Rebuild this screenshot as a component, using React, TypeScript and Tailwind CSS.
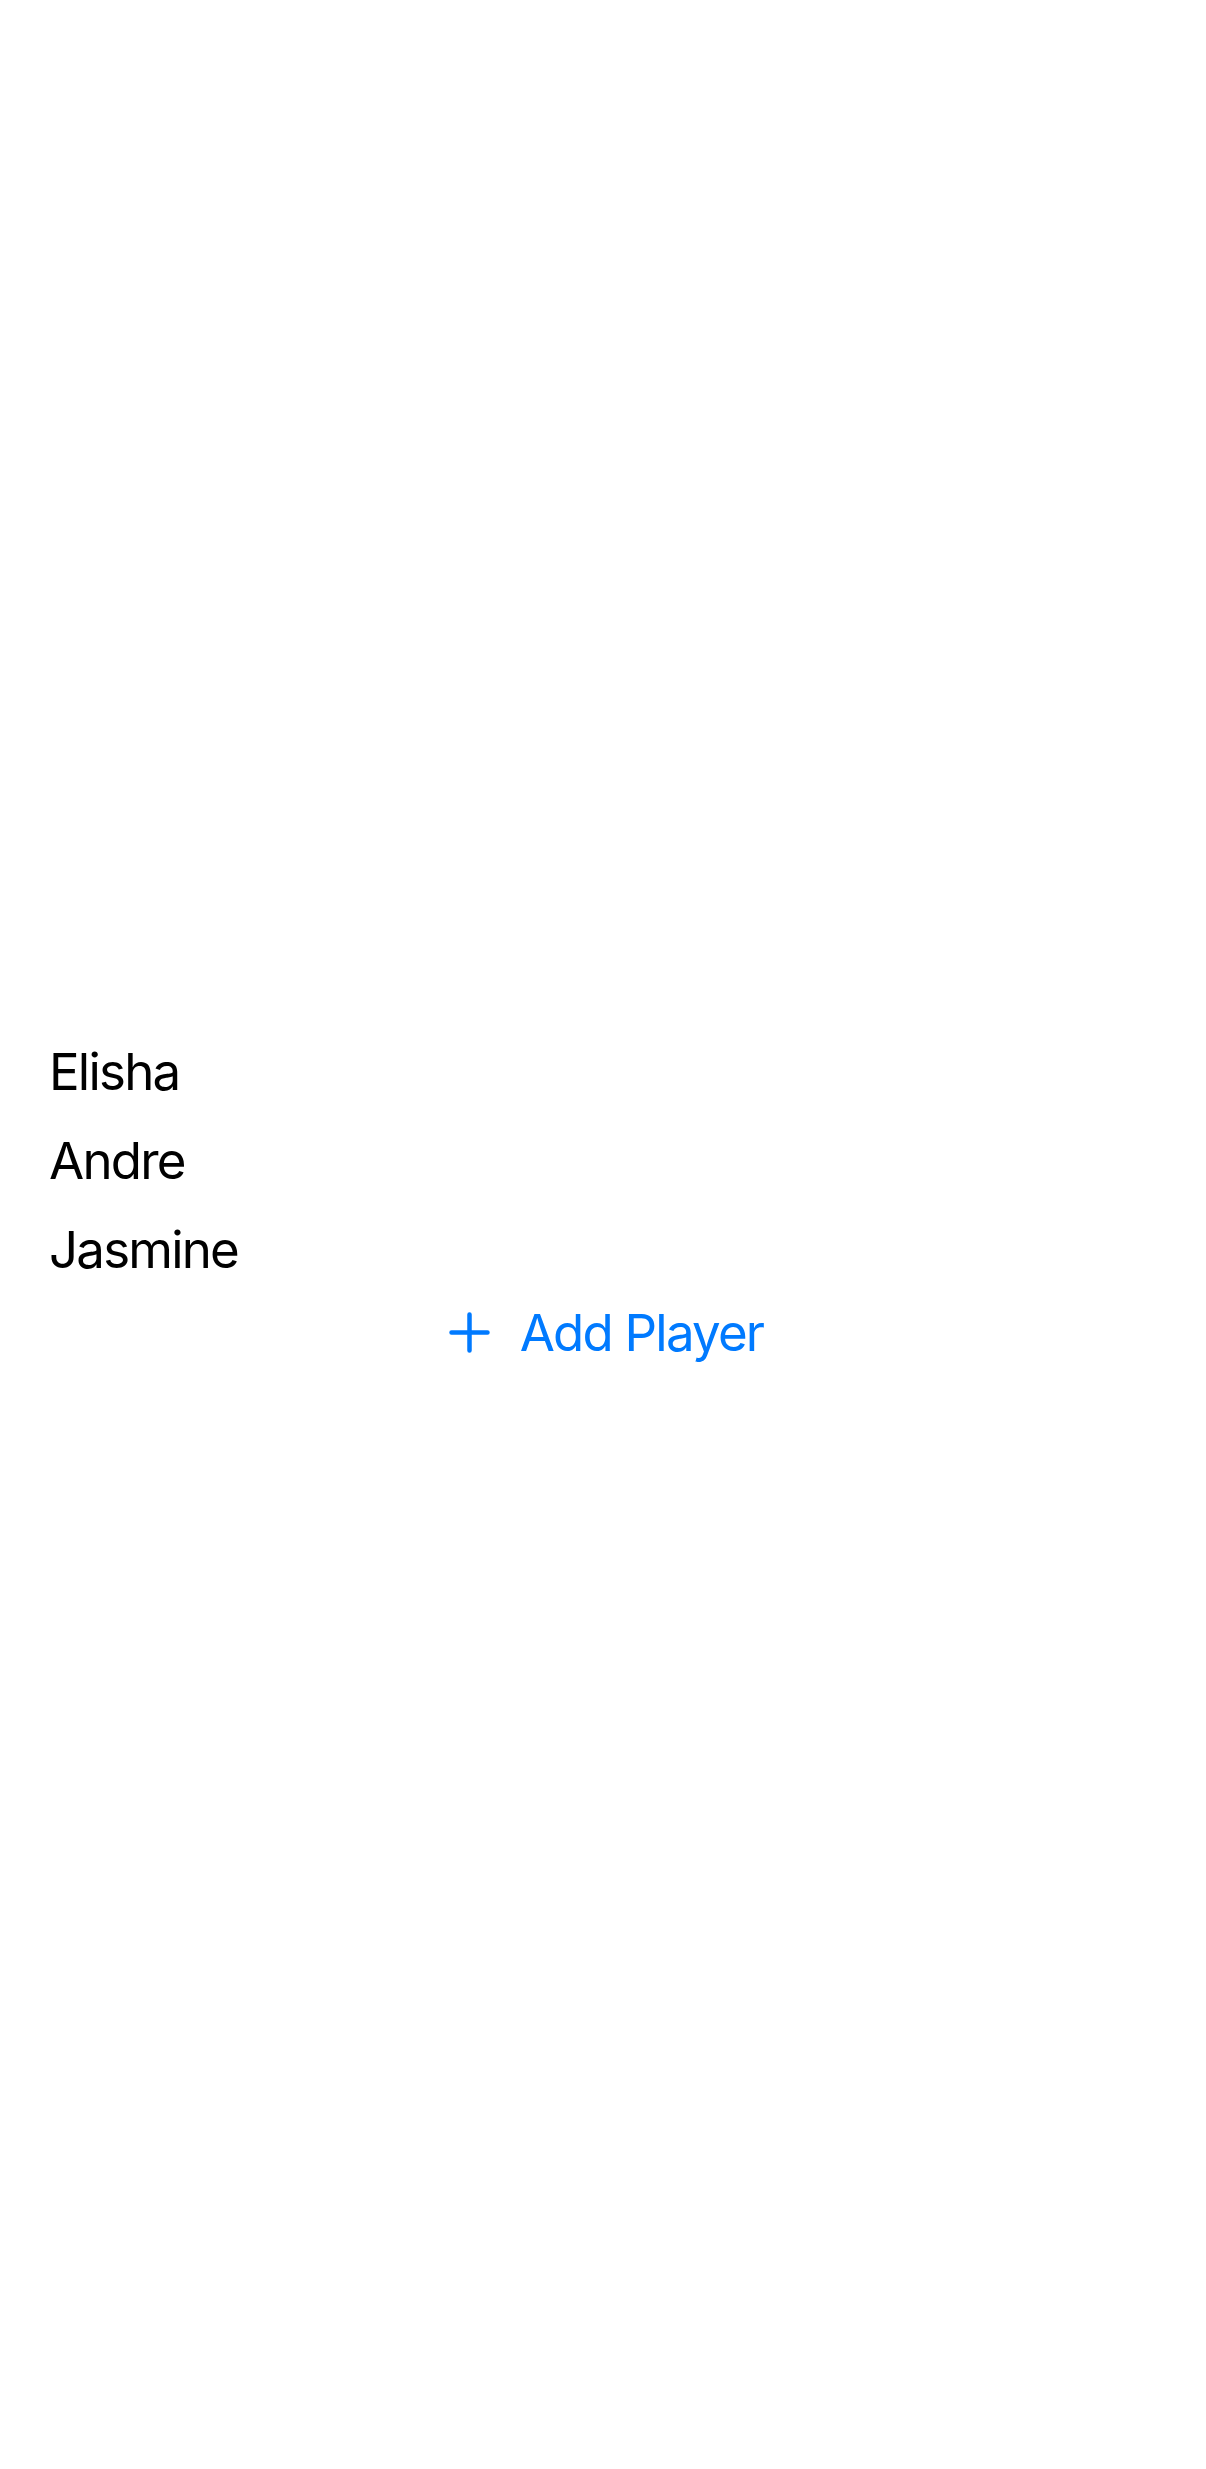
import React from 'react';

const players = ['Elisha', 'Andre', 'Jasmine'];

const PlusIcon = () => (
  <svg width="41" height="41" viewBox="0 0 41 41" fill="none" aria-hidden="true">
    <path d="M20.5 2.5V38.5M2.5 20.5H38.5" stroke="#007AFF" strokeWidth="4.5" strokeLinecap="round" />
  </svg>
);

export default function App() {
  return (
    <div
      className="w-[1206px] h-[2469px] bg-white flex flex-col pt-[1027px]"
      style={{ fontFamily: 'Inter, "Noto Sans", sans-serif' }}
    >
      <ul className="flex flex-col pl-[49px]">
        {players.map((name) => (
          <li key={name} className="text-[51px] leading-[89px] tracking-[-0.035em] text-black">
            {name}
          </li>
        ))}
      </ul>
      <button className="self-center flex items-center gap-[30px] h-[77px] pl-[6px] text-[51px] leading-[77px] tracking-[-0.035em] text-[#007AFF]">
        <PlusIcon />
        <span>Add Player</span>
      </button>
    </div>
  );
}
